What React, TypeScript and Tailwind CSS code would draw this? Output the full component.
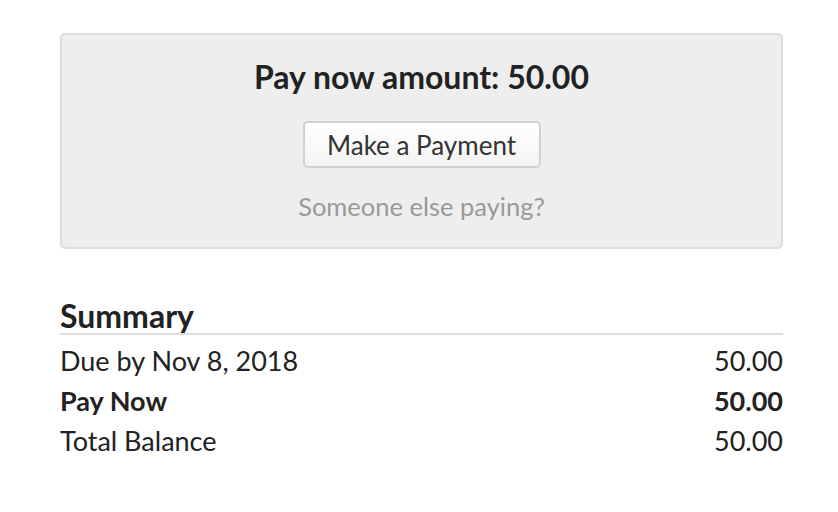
import React from "react";

const rows = [
  { label: "Due by Nov 8, 2018", amount: "50.00", bold: false },
  { label: "Pay Now", amount: "50.00", bold: true },
  { label: "Total Balance", amount: "50.00", bold: false },
];

export default function App() {
  return (
    <div
      className="w-[838px] h-[512px] bg-white text-[#222] pt-[33px] pl-[60px]"
      style={{ fontFamily: "Lato, 'Open Sans', sans-serif" }}
    >
      <div className="w-[723px] h-[216px] rounded-[5px] border-2 border-[#dddddd] bg-[#eeeeee] flex flex-col items-center pt-[23px]">
        <h2 className="text-[32px] leading-[38px] font-bold text-[#222]">
          Pay now amount: 50.00
        </h2>
        <button className="mt-[25px] h-[47px] w-[238px] rounded-[5px] border-2 border-[#d0d0d0] bg-gradient-to-b from-white to-[#f3f3f3] text-[26px] leading-none text-[#333]">
          Make a Payment
        </button>
        <a className="mt-[23px] text-[25.5px] leading-[30px] text-[#999]">
          Someone else paying?
        </a>
      </div>

      <div className="w-[723px] mt-[50px]">
        <h3 className="text-[32px] leading-[34px] font-bold text-[#222] border-b-2 border-[#dddddd]">
          Summary
        </h3>
        <div className="flex flex-col pt-[6px]">
          {rows.map((r) => (
            <div
              key={r.label}
              className={`flex justify-between text-[27px] leading-[40px] ${r.bold ? "font-bold" : ""}`}
            >
              <span>{r.label}</span>
              <span>{r.amount}</span>
            </div>
          ))}
        </div>
      </div>
    </div>
  );
}
